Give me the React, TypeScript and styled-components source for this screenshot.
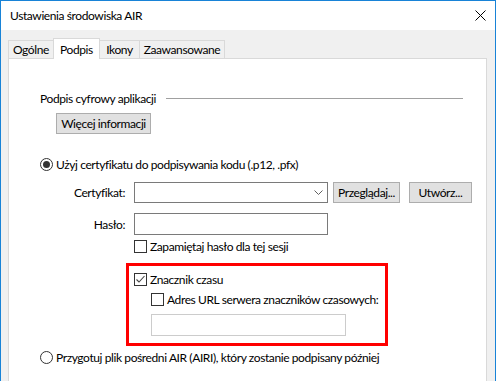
import styled, { createGlobalStyle } from 'styled-components';

const GlobalStyle = createGlobalStyle`
  html, body {
    margin: 0;
    padding: 0;
    background: #fff;
  }
  body {
    font-family: Lato, "Liberation Sans", Arial, sans-serif;
    font-size: 12px;
    letter-spacing: -0.4px;
    color: #000;
  }
  * {
    box-sizing: border-box;
  }
`;

const tabs = [
  { label: 'Ogólne', width: 46 },
  { label: 'Podpis', width: 47, active: true },
  { label: 'Ikony', width: 41 },
  { label: 'Zaawansowane', width: 86 },
];

const App = () => {
  return (
    <>
      <GlobalStyle />
      <Window>
        <TitleBar>
          <Title>Ustawienia środowiska AIR</Title>
          <CloseIcon width="11" height="11" viewBox="0 0 11 11">
            <path d="M0.5 0.5 L10.5 10.5 M10.5 0.5 L0.5 10.5" stroke="#000" strokeWidth="1" />
          </CloseIcon>
        </TitleBar>

        <Client>
          <TabRow>
            {tabs.map((t) => (
              <Tab key={t.label} $width={t.width} $active={!!t.active}>
                {t.label}
              </Tab>
            ))}
          </TabRow>

          <Panel>
            <GroupHeader>
              <span>Podpis cyfrowy aplikacji</span>
              <GroupLine />
            </GroupHeader>

            <Button $width={95} $ml={16} $mt={7}>Więcej informacji</Button>

            <OptionRow $mt={22}>
              <Radio $checked />
              <span>Użyj certyfikatu do podpisywania kodu (.p12, .pfx)</span>
            </OptionRow>

            <FieldRow $mt={9}>
              <FieldLabel>Certyfikat:</FieldLabel>
              <Combo>
                <svg width="9" height="5" viewBox="0 0 9 5">
                  <path d="M0.5 0.5 L4.5 4.5 L8.5 0.5" stroke="#606060" strokeWidth="1" fill="none" />
                </svg>
              </Combo>
              <Button $width={67} $ml={5}>Przeglądaj...</Button>
              <Button $width={63} $ml={9}>Utwórz...</Button>
            </FieldRow>

            <FieldRow $mt={10}>
              <FieldLabel>Hasło:</FieldLabel>
              <TextInput />
            </FieldRow>

            <OptionRow $mt={3} $ml={94}>
              <Checkbox />
              <span>Zapamiętaj hasło dla tej sesji</span>
            </OptionRow>

            <Highlight>
              <OptionRow>
                <Checkbox $checked />
                <span>Znacznik czasu</span>
              </OptionRow>
              <OptionRow $mt={4} $ml={17}>
                <Checkbox />
                <span>Adres URL serwera znaczników czasowych:</span>
              </OptionRow>
              <TextInput $disabled $width={195} $ml={17} $mt={7} />
            </Highlight>

            <OptionRow $mt={3}>
              <Radio />
              <span>Przygotuj plik pośredni AIR (AIRI), który zostanie podpisany później</span>
            </OptionRow>
          </Panel>
        </Client>
      </Window>
    </>
  );
};

const Radio = ({ $checked }: { $checked?: boolean }) => (
  <RadioCircle>{$checked && <RadioDot />}</RadioCircle>
);

const Checkbox = ({ $checked }: { $checked?: boolean }) => (
  <CheckBox>
    {$checked && (
      <svg width="11" height="11" viewBox="0 0 11 11">
        <path d="M1.5 5.5 L4 8 L9.5 2" stroke="#444" strokeWidth="1.1" fill="none" />
      </svg>
    )}
  </CheckBox>
);

export default App;

// okno dialogu
const Window = styled.div`
  width: 496px;
  height: 381px;
  border: 1px solid #1883d7;
  border-bottom: none;
  display: flex;
  flex-direction: column;
  overflow: hidden;
`;

const TitleBar = styled.div`
  height: 29px;
  display: flex;
  align-items: center;
  justify-content: space-between;
  padding: 0 9px 0 9px;
  background: #fff;
`;

const Title = styled.span`
  font-size: 12px;
`;

const CloseIcon = styled.svg`
  display: block;
`;

const Client = styled.div`
  flex: 1;
  display: flex;
  flex-direction: column;
  background: #f0f0f0;
  padding: 8px 8px 0 7px;
`;

const TabRow = styled.div`
  display: flex;
  align-items: flex-end;
  height: 20px;
`;

const Tab = styled.div<{ $width: number; $active: boolean }>`
  width: ${({ $width }) => $width}px;
  height: ${({ $active }) => ($active ? 21 : 18)}px;
  margin-bottom: ${({ $active }) => ($active ? -1 : 0)}px;
  margin-left: -1px;
  &:first-child {
    margin-left: 0;
  }
  display: flex;
  align-items: center;
  justify-content: center;
  border: 1px solid #d9d9d9;
  border-bottom: none;
  background: ${({ $active }) => ($active ? '#fff' : '#f0f0f0')};
  position: relative;
  z-index: ${({ $active }) => ($active ? 2 : 1)};
  white-space: nowrap;
`;

const Panel = styled.div`
  flex: 1;
  display: flex;
  flex-direction: column;
  align-items: flex-start;
  background: #fff;
  border: 1px solid #d9d9d9;
  border-bottom: none;
  padding: 31px 0 0 31px;
`;

const GroupHeader = styled.div`
  display: flex;
  align-items: center;
  height: 16px;
  align-self: stretch;
  margin-right: 23px;
  white-space: nowrap;
`;

const GroupLine = styled.div`
  flex: 1;
  height: 1px;
  margin-left: 10px;
  background: #a0a0a0;
`;

const Button = styled.div<{ $width: number; $ml?: number; $mt?: number }>`
  width: ${({ $width }) => $width}px;
  height: 21px;
  margin-left: ${({ $ml }) => $ml ?? 0}px;
  margin-top: ${({ $mt }) => $mt ?? 0}px;
  display: flex;
  align-items: center;
  justify-content: center;
  background: #e1e1e1;
  border: 1px solid #adadad;
  white-space: nowrap;
`;

const OptionRow = styled.div<{ $mt?: number; $ml?: number }>`
  display: flex;
  align-items: center;
  gap: 3px;
  height: 16px;
  margin-top: ${({ $mt }) => $mt ?? 0}px;
  margin-left: ${({ $ml }) => $ml ?? 0}px;
  white-space: nowrap;
`;

const RadioCircle = styled.div`
  width: 13px;
  height: 13px;
  border: 1px solid #333;
  border-radius: 50%;
  display: flex;
  align-items: center;
  justify-content: center;
  flex-shrink: 0;
`;

const RadioDot = styled.div`
  width: 7px;
  height: 7px;
  border-radius: 50%;
  background: #333;
`;

const CheckBox = styled.div`
  width: 13px;
  height: 13px;
  border: 1px solid #333;
  background: #fff;
  display: flex;
  align-items: center;
  justify-content: center;
  flex-shrink: 0;
`;

const FieldRow = styled.div<{ $mt: number }>`
  display: flex;
  align-items: center;
  height: 22px;
  margin-top: ${({ $mt }) => $mt}px;
`;

const FieldLabel = styled.div`
  width: 85px;
  margin-right: 9px;
  text-align: right;
`;

const Combo = styled.div`
  width: 194px;
  height: 21px;
  border: 1px solid #7a7a7a;
  background: #fff;
  display: flex;
  align-items: center;
  justify-content: flex-end;
  padding-right: 4px;
`;

const TextInput = styled.div<{ $disabled?: boolean; $width?: number; $ml?: number; $mt?: number }>`
  width: ${({ $width }) => $width ?? 194}px;
  height: 22px;
  margin-left: ${({ $ml }) => $ml ?? 0}px;
  margin-top: ${({ $mt }) => $mt ?? 0}px;
  border: 1px solid ${({ $disabled }) => ($disabled ? '#cccccc' : '#7a7a7a')};
  background: #fff;
`;

// czerwona ramka wyróżnienia
const Highlight = styled.div`
  width: 262px;
  height: 83px;
  margin-top: 9px;
  margin-left: 86px;
  border: 3px solid #ff0000;
  padding: 5px 0 0 5px;
  display: flex;
  flex-direction: column;
  align-items: flex-start;
`;
